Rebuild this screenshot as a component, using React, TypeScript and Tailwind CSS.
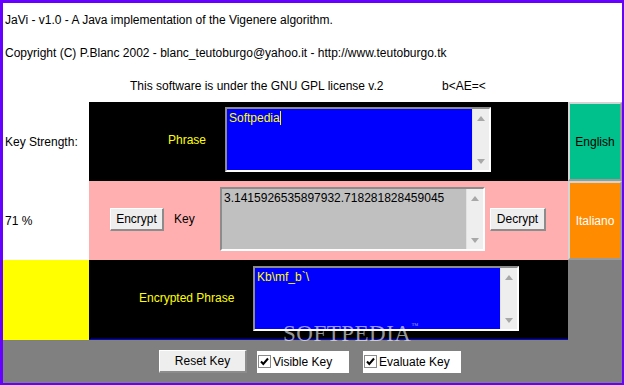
import React from 'react';

// Sunken text area with a Swing-like vertical scrollbar
const TextArea = ({
  value,
  bg,
  color,
  w,
  h,
  caret = false,
}: {
  value: string;
  bg: string;
  color: string;
  w: string;
  h: string;
  caret?: boolean;
}) => (
  <div
    className={`${w} ${h} flex shrink-0 border-2 border-t-[#8c8c8c] border-l-[#8c8c8c] border-r-white border-b-white`}
  >
    <div className={`flex-1 ${bg} ${color} pl-[2px] pt-[2px] text-[12px] leading-[14px] whitespace-pre`}>
      {value}
      {caret && <span className="inline-block w-px h-[14px] align-top bg-[#ffff00]" />}
    </div>
    <div className="w-[17px] bg-[#eeeeee] border-l border-[#e2e2e2] flex flex-col justify-between items-center pt-[7px] pb-[6px]">
      <svg width="8" height="5" viewBox="0 0 8 5">
        <path d="M0 5 L4 0 L8 5 Z" fill="#a8a8a8" />
      </svg>
      <svg width="8" height="5" viewBox="0 0 8 5">
        <path d="M0 0 L8 0 L4 5 Z" fill="#a8a8a8" />
      </svg>
    </div>
  </div>
);

const RaisedButton = ({ label, w }: { label: string; w: string }) => (
  <button
    className={`${w} h-[23px] shrink-0 bg-[#eeeeee] text-black text-[12px] leading-[14px] border border-t-white border-l-white border-r-2 border-b-2 border-r-[#8c8c8c] border-b-[#8c8c8c]`}
  >
    {label}
  </button>
);

const CheckBox = ({ label, w }: { label: string; w: string }) => (
  <div className={`${w} h-[22px] bg-white flex items-center pl-[1px] gap-[2px] text-[12px] leading-[14px] text-black`}>
    <svg width="13" height="13" viewBox="0 0 13 13">
      <rect x="0.5" y="0.5" width="12" height="12" fill="#ffffff" stroke="#8a8a8a" />
      <path d="M3 6.5 L5.3 9 L10 3.5" fill="none" stroke="#000000" strokeWidth="2" />
    </svg>
    <span>{label}</span>
  </div>
);

export default function App() {
  return (
    <div className="w-[624px] h-[385px] relative flex flex-col bg-white border-[#6600ff] border-t-[3px] border-l-[3px] border-r-2 border-b-2 font-['Liberation_Sans',Arial,sans-serif] text-[12px] leading-[14px] text-black overflow-hidden">
      {/* header texts */}
      <div className="h-[99px] shrink-0 pt-[10px] pl-[2px] flex flex-col gap-[19px]">
        <p>JaVi - v1.0 - A Java implementation of the Vigenere algorithm.</p>
        <p>Copyright (C) P.Blanc 2002 - blanc_teutoburgo@yahoo.it - http://www.teutoburgo.tk</p>
        <p className="flex pl-[125px]">
          <span className="w-[312px]">This software is under the GNU GPL license v.2</span>
          <span>b&lt;AE=&lt;</span>
        </p>
      </div>

      <div className="grid grid-cols-[86px_479px_54px] grid-rows-[79px_79px_80px] shrink-0">
        {/* row 1 */}
        <div className="flex items-center pl-[2px]">Key Strength:</div>
        <div className="bg-black flex items-center pb-[4px] pl-[79px]">
          <span className="w-[57px] text-[#ffff00]">Phrase</span>
          <TextArea value="Softpedia" bg="bg-[#0000ff]" color="text-[#ffff00]" w="w-[266px]" h="h-[65px]" caret />
        </div>
        <div className="bg-[#00c08b] flex items-center justify-center border-2 border-t-[#d4d4d4] border-l-[#d4d4d4] border-r-[#9a9a9a] border-b-[#9a9a9a]">
          English
        </div>

        {/* row 2 */}
        <div className="flex items-center pl-[2px]">71 %</div>
        <div className="bg-[#ffafaf] flex items-center pb-[3px] pl-[21px]">
          <RaisedButton label="Encrypt" w="w-[54px]" />
          <span className="w-[56px] shrink-0 pl-[10px]">Key</span>
          <TextArea
            value="3.1415926535897932.718281828459045"
            bg="bg-[#c0c0c0]"
            color="text-black"
            w="w-[265px]"
            h="h-[64px]"
          />
          <div className="ml-[5px]">
            <RaisedButton label="Decrypt" w="w-[56px]" />
          </div>
        </div>
        <div className="bg-[#ff8c00] text-white flex items-center justify-center border-2 border-t-[#d4d4d4] border-l-[#d4d4d4] border-r-[#9a9a9a] border-b-[#9a9a9a]">
          Italiano
        </div>

        {/* row 3 */}
        <div className="bg-[#ffff00]" />
        <div className="bg-black border-b border-b-[#0000ff] flex items-center pb-[3px] pl-[50px]">
          <span className="w-[114px] text-[#ffff00]">Encrypted Phrase</span>
          <TextArea value={'Kb\\mf_b`\\'} bg="bg-[#0000ff]" color="text-[#ffff00]" w="w-[266px]" h="h-[65px]" />
        </div>
        <div className="bg-[#808080]" />
      </div>

      {/* bottom controls */}
      <div className="flex-1 bg-[#808080] flex items-center pl-[156px]">
        <RaisedButton label="Reset Key" w="w-[88px]" />
        <div className="ml-[10px]">
          <CheckBox label="Visible Key" w="w-[92px]" />
        </div>
        <div className="ml-[14px]">
          <CheckBox label="Evaluate Key" w="w-[98px]" />
        </div>
      </div>

      {/* watermark */}
      <div className="absolute left-[280px] top-[319px] pointer-events-none flex items-start text-white/60 font-['Liberation_Serif',serif]">
        <span className="text-[23px] leading-[24px] tracking-[0.5px]">SOFTPEDIA</span>
        <span className="text-[7px] leading-[8px]">™</span>
      </div>
    </div>
  );
}
